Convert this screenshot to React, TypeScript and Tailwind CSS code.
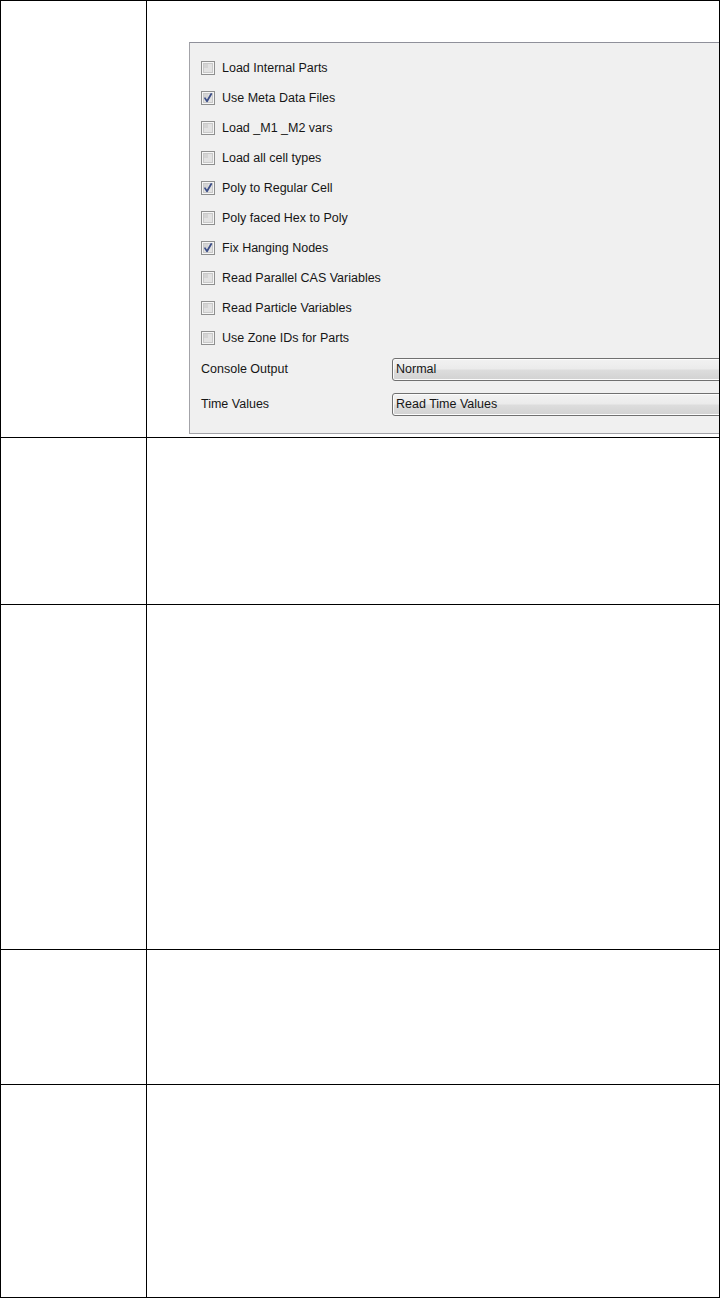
import React from "react";

const items: { label: string; checked: boolean }[] = [
  { label: "Load Internal Parts", checked: false },
  { label: "Use Meta Data Files", checked: true },
  { label: "Load _M1 _M2 vars", checked: false },
  { label: "Load all cell types", checked: false },
  { label: "Poly to Regular Cell", checked: true },
  { label: "Poly faced Hex to Poly", checked: false },
  { label: "Fix Hanging Nodes", checked: true },
  { label: "Read Parallel CAS Variables", checked: false },
  { label: "Read Particle Variables", checked: false },
  { label: "Use Zone IDs for Parts", checked: false },
];

function CheckBox({ checked }: { checked: boolean }) {
  return (
    <svg width="14" height="14" viewBox="0 0 14 14" className="shrink-0">
      <rect x="0.5" y="0.5" width="13" height="13" fill="#f6f6f6" stroke="#8e8f8f" />
      <rect x="2.5" y="2.5" width="9" height="9" fill="#e2e2e2" stroke="#c9c9c9" />
      <rect x="3" y="3" width="4" height="4" fill="#d4d4d4" />
      {checked && (
        <path
          d="M4 7.3 L6 10.2 L10.2 3"
          fill="none"
          stroke="#3d4f88"
          strokeWidth="1.8"
          strokeLinecap="round"
          strokeLinejoin="round"
        />
      )}
    </svg>
  );
}

function Dropdown({ value }: { value: string }) {
  return (
    <div className="h-[23px] w-[340px] shrink-0 rounded-[3px] border border-[#707070] bg-[linear-gradient(to_bottom,#f2f2f2_0%,#ebebeb_48%,#dddddd_52%,#d2d2d2_100%)] pl-[3px] flex items-center shadow-[inset_0_0_0_1px_#fcfcfc]">
      <span>{value}</span>
    </div>
  );
}

function Panel() {
  return (
    <div className="ml-[42px] mt-[41px] h-[392px] w-[560px] border border-[#a3a3a8] border-t-[#8f909a] bg-[#f0f0f0] pl-[11px] pt-[10px] text-[12.5px] leading-none text-[#161616] [font-family:'Liberation_Sans',Arial,sans-serif]">
      {items.map((it) => (
        <div key={it.label} className="flex h-[30px] items-center gap-[7px]">
          <CheckBox checked={it.checked} />
          <span>{it.label}</span>
        </div>
      ))}
      <div className="flex h-[32px] items-center">
        <span className="w-[191px] shrink-0">Console Output</span>
        <Dropdown value="Normal" />
      </div>
      <div className="mt-[3px] flex h-[32px] items-center">
        <span className="w-[191px] shrink-0">Time Values</span>
        <Dropdown value="Read Time Values" />
      </div>
    </div>
  );
}

function Row({
  h,
  last,
  children,
}: {
  h: string;
  last?: boolean;
  children?: React.ReactNode;
}) {
  return (
    <div className={`flex ${h} ${last ? "" : "border-b border-black"}`}>
      <div className="w-[146px] shrink-0 border-r border-black" />
      <div className="min-w-0 flex-1 overflow-hidden">{children}</div>
    </div>
  );
}

export default function App() {
  return (
    <div className="h-[1298px] w-[720px] bg-white">
      <div className="flex h-full w-full flex-col border border-black">
        <Row h="h-[437px]">
          <Panel />
        </Row>
        <Row h="h-[167px]" />
        <Row h="h-[345px]" />
        <Row h="h-[135px]" />
        <Row h="h-[212px]" last />
      </div>
    </div>
  );
}
